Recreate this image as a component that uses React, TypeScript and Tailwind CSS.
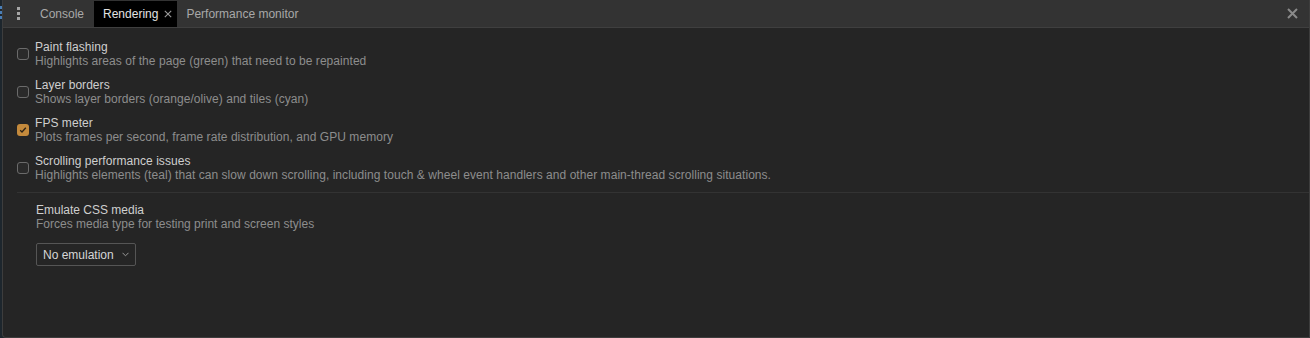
import { useState } from "react";

const options = [
  {
    title: "Paint flashing",
    desc: "Highlights areas of the page (green) that need to be repainted",
    checked: false,
  },
  {
    title: "Layer borders",
    desc: "Shows layer borders (orange/olive) and tiles (cyan)",
    checked: false,
  },
  {
    title: "FPS meter",
    desc: "Plots frames per second, frame rate distribution, and GPU memory",
    checked: true,
  },
  {
    title: "Scrolling performance issues",
    desc: "Highlights elements (teal) that can slow down scrolling, including touch & wheel event handlers and other main-thread scrolling situations.",
    checked: false,
  },
];

function Checkbox({ checked, onChange }: { checked: boolean; onChange: () => void }) {
  return (
    <button
      onClick={onChange}
      className={
        checked
          ? "flex h-[12px] w-[12px] shrink-0 items-center justify-center rounded-[3px] bg-[#c48a3c]"
          : "h-[12px] w-[12px] shrink-0 rounded-[3px] border border-[#6b6b6b] bg-[#2a2a2a]"
      }
    >
      {checked ? (
        <svg width="8" height="8" viewBox="0 0 8 8" fill="none">
          <path d="M1.2 4.2 3 6 6.8 1.8" stroke="#2b2115" strokeWidth="1.3" />
        </svg>
      ) : null}
    </button>
  );
}

export default function App() {
  const [state, setState] = useState(options.map((o) => o.checked));

  return (
    <div
      className="flex h-[338px] w-[1310px] overflow-hidden bg-[#1d262d] text-[12px]"
      style={{ fontFamily: '"Liberation Sans", Arial, sans-serif' }}
    >
      {/* sliver of the sidebar behind the drawer */}
      <div className="flex w-[2px] shrink-0 flex-col gap-[2px] pt-[6px]">
        <div className="h-[3px] w-[2px] bg-[#4a7fb8]" />
        <div className="h-[3px] w-[2px] bg-[#4a7fb8]" />
        <div className="h-[3px] w-[2px] bg-[#4a7fb8]" />
      </div>

      <div className="flex min-w-0 flex-1 flex-col overflow-hidden rounded-bl-[4px] border-b border-l border-r border-[#3d3d3d] bg-[#252525]">
        {/* tab strip */}
        <div className="flex h-[28px] shrink-0 items-stretch border-b border-[#3f3f3f] bg-[#333333]">
          <div className="flex w-[31px] items-center justify-center">
            <div className="flex flex-col gap-[2px]">
              <span className="h-[3px] w-[3px] bg-[#a6a6a6]" />
              <span className="h-[3px] w-[3px] bg-[#a6a6a6]" />
              <span className="h-[3px] w-[3px] bg-[#a6a6a6]" />
            </div>
          </div>
          <div className="flex items-center px-[6px] text-[#a8a8a8]">Console</div>
          <div className="ml-[4px] mt-[1px] flex items-center gap-[6px] bg-black pl-[9px] pr-[5px] text-[#e3e3e3]">
            Rendering
            <svg width="8" height="8" viewBox="0 0 8 8">
              <path d="M0.8 0.8 7.2 7.2M7.2 0.8 0.8 7.2" stroke="#9a9a9a" strokeWidth="1.1" />
            </svg>
          </div>
          <div className="flex items-center px-[9px] text-[#a8a8a8]">Performance monitor</div>
          <div className="flex-1" />
          <div className="flex w-[30px] items-center justify-center pr-[4px]">
            <svg width="11" height="11" viewBox="0 0 11 11">
              <path d="M1 1 10 10M10 1 1 10" stroke="#8a8a8a" strokeWidth="2" />
            </svg>
          </div>
        </div>

        {/* rendering options */}
        <div className="flex flex-col pl-[14px] pt-[12px]">
          <div className="flex flex-col gap-[10px]">
            {options.map((o, i) => (
              <div key={o.title} className="flex items-center gap-[6px]">
                <Checkbox
                  checked={state[i]}
                  onChange={() => setState((s) => s.map((v, j) => (j === i ? !v : v)))}
                />
                <div className="flex flex-col leading-[14px] tracking-[0.05px]">
                  <span className="text-[#cfcfcf]">{o.title}</span>
                  <span className="text-[#8d8d8d]">{o.desc}</span>
                </div>
              </div>
            ))}
          </div>

          <div className="mt-[10px] h-px bg-[#333333]" />

          <div className="flex flex-col pl-[19px] pt-[10px] leading-[14px]">
            <span className="text-[#cfcfcf]">Emulate CSS media</span>
            <span className="text-[#8d8d8d]">Forces media type for testing print and screen styles</span>
            <div className="mt-[12px] flex h-[23px] w-[100px] items-center justify-between rounded-[2px] border border-[#555555] pl-[6px] pr-[6px] text-[#d6d6d6]">
              No emulation
              <svg width="7" height="5" viewBox="0 0 7 5">
                <path d="M0.5 0.8 3.5 3.8 6.5 0.8" stroke="#9a9a9a" fill="none" strokeWidth="1" />
              </svg>
            </div>
          </div>
        </div>
      </div>
    </div>
  );
}
